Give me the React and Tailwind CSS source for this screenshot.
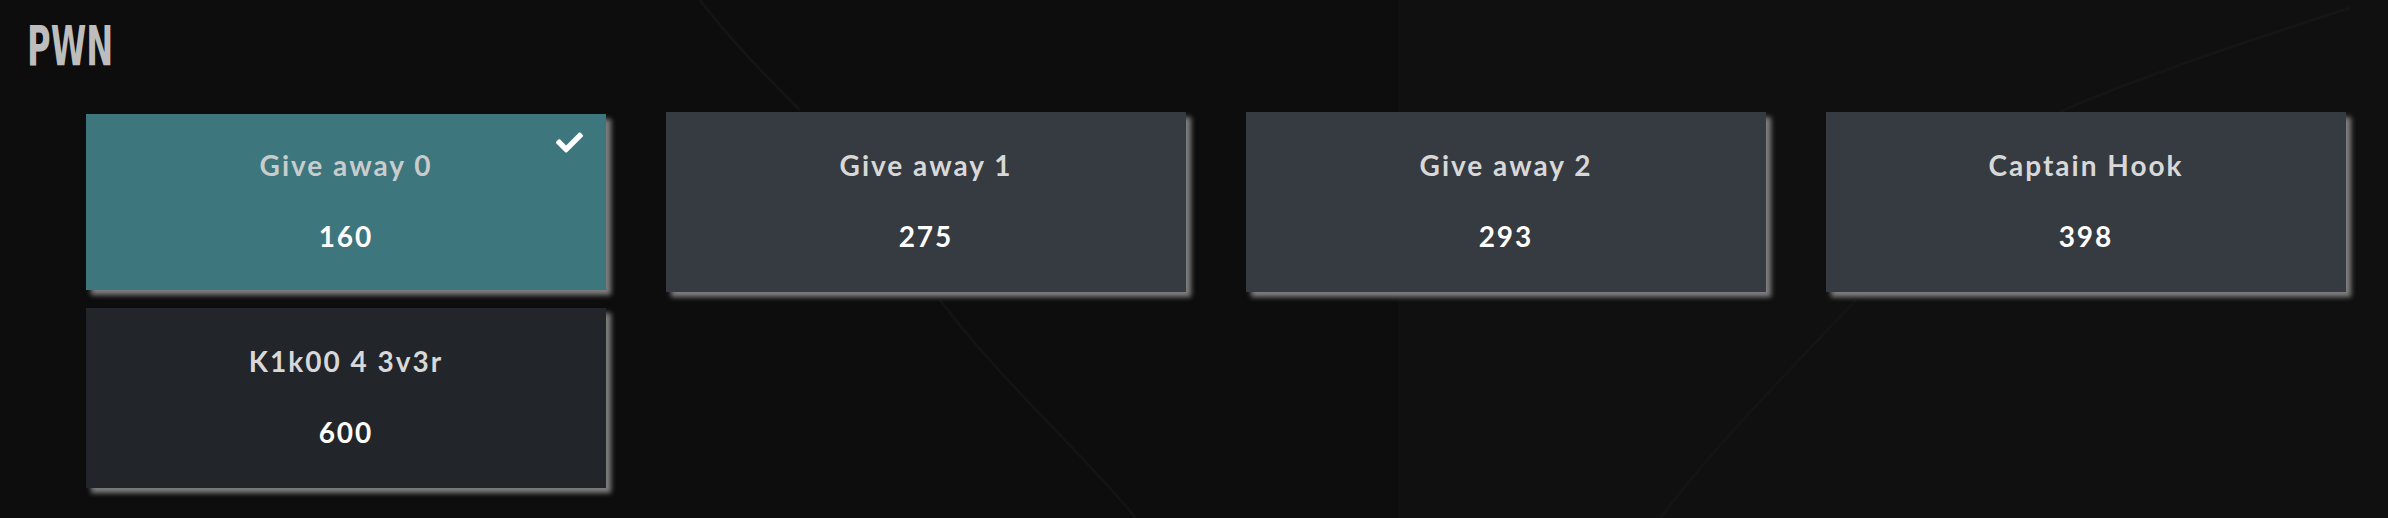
import { FaCheck } from "react-icons/fa";

const challenges = [
  { name: "Give away 0", points: 160, solved: true },
  { name: "Give away 1", points: 275 },
  { name: "Give away 2", points: 293 },
  { name: "Captain Hook", points: 398 },
  { name: "K1k00 4 3v3r", points: 600, dark: true },
];

// Faint decorative background lines
const Backdrop = () => (
  <svg
    className="absolute inset-0 w-full h-full pointer-events-none"
    viewBox="0 0 2388 518"
    preserveAspectRatio="none"
  >
    <rect x="1398" y="0" width="990" height="518" fill="#101010" />
    <path d="M700 0 C 730 40, 770 80, 800 110" stroke="#141414" strokeWidth="3" fill="none" />
    <path d="M940 300 C 1000 380, 1080 450, 1136 518" stroke="#131313" strokeWidth="3" fill="none" />
    <path d="M2350 8 C 2250 40, 2130 80, 2060 112" stroke="#151515" strokeWidth="3" fill="none" />
    <path d="M1856 300 C 1790 370, 1720 440, 1660 518" stroke="#141414" strokeWidth="3" fill="none" />
  </svg>
);

const Card = ({ name, points, solved, dark }) => {
  const bg = solved ? "bg-[#3d767c]" : dark ? "bg-[#22252a]" : "bg-[#363a41]";
  return (
    <div
      className={`relative w-[520px] ${solved ? "h-[176px] pt-[34px]" : "h-[180px] pt-[36px]"} ${bg} shadow-[5px_5px_5px_rgba(140,140,140,0.9)] flex flex-col items-center font-['Lato',sans-serif] font-bold text-[28px] tracking-[2px]`}
    >
      {solved && (
        <FaCheck className="absolute top-[15px] right-[23px] text-white" size={27} />
      )}
      <div className={`leading-[34px] ${solved ? "text-[#c9cccd]" : "text-[#d8d8d8]"}`}>{name}</div>
      <div className="leading-[34px] mt-[37px] text-white">{points}</div>
    </div>
  );
};

export default function App() {
  return (
    <div className="relative w-[2388px] h-[518px] bg-[#0d0d0d] overflow-hidden">
      <Backdrop />
      <div className="relative">
        <div className="pl-[27px] pt-[14px] h-[112px]">
          <h1 className="inline-block origin-left scale-x-[0.64] font-['DejaVu_Sans_Condensed','DejaVu_Sans',sans-serif] font-bold text-[56px] leading-[64px] text-[#bdbdbd]">
            PWN
          </h1>
        </div>
        <div className="pl-[86px] grid grid-cols-[repeat(4,520px)] gap-x-[60px] gap-y-[16px] items-center">
          {challenges.map((c) => (
            <Card key={c.name} {...c} />
          ))}
        </div>
      </div>
    </div>
  );
}
